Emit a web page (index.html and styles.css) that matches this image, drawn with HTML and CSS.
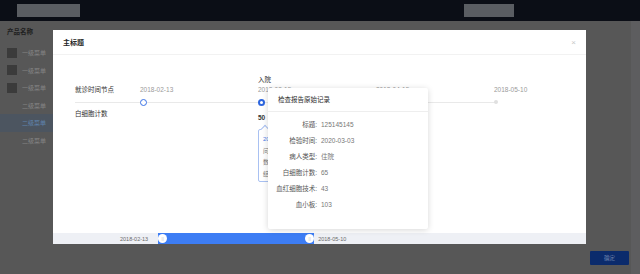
FILE: index.html
```html
<!DOCTYPE html>
<html lang="zh-CN">
<head>
    <meta charset="UTF-8">
    <meta name="viewport" content="width=device-width, initial-scale=1.0">
    <title>检查报告</title>
    <link rel="stylesheet" href="styles.css">
</head>
<body>

    <header class="topbar">
        <div class="logo-box"></div>
        <div class="user-box"></div>
    </header>

    <div class="main">
        <aside class="sidebar">
            <div class="product">产品名称</div>
            <ul class="menu">
                <li class="menu-item"><span class="menu-icon"></span>一级菜单</li>
                <li class="menu-item"><span class="menu-icon"></span>一级菜单</li>
                <li class="menu-item"><span class="menu-icon"></span>一级菜单</li>
                <li class="menu-item sub">二级菜单</li>
                <li class="menu-item sub active">二级菜单</li>
                <li class="menu-item sub">二级菜单</li>
            </ul>
        </aside>
        <div class="workspace">
            <button class="confirm">确定</button>
        </div>
        <div class="scroll-strip"></div>
    </div>

    <div class="modal">
        <div class="modal-header">
            <span class="modal-title">主标题</span>
            <span class="modal-close">×</span>
        </div>

        <div class="modal-body">
            <div class="timeline">
                <div class="row">
                    <div class="head"></div>
                    <div class="col"></div>
                    <div class="col event">入院</div>
                </div>
                <div class="row">
                    <div class="head label">就诊时间节点</div>
                    <div class="col date">2018-02-13</div>
                    <div class="col date">2018-03-15</div>
                    <div class="col date">2018-04-15</div>
                    <div class="col date">2018-05-10</div>
                </div>
                <div class="row axis">
                    <div class="head"></div>
                    <div class="col"><span class="node"></span></div>
                    <div class="col"><span class="node current"></span></div>
                    <div class="col"><span class="node"></span></div>
                    <div class="col"><span class="node dot"></span></div>
                </div>
                <div class="row">
                    <div class="head label">白细胞计数</div>
                    <div class="col"></div>
                    <div class="col value">50</div>
                </div>
                <div class="row">
                    <div class="head"></div>
                    <div class="col"></div>
                    <div class="col">
                        <div class="tip">
                            <div class="tip-date">2018-03-15</div>
                            <div>问诊记录：入院检查</div>
                            <div>数值：50</div>
                            <div>结论：正常范围</div>
                        </div>
                    </div>
                </div>
            </div>

            <div class="report">
                <div class="report-title">检查报告原始记录</div>
                <div class="report-rows">
                    <div class="report-row"><span class="report-key">标题:</span><span class="report-val">125145145</span></div>
                    <div class="report-row"><span class="report-key">检验时间:</span><span class="report-val">2020-03-03</span></div>
                    <div class="report-row"><span class="report-key">病人类型:</span><span class="report-val">住院</span></div>
                    <div class="report-row"><span class="report-key">白细胞计数:</span><span class="report-val">65</span></div>
                    <div class="report-row"><span class="report-key">血红细胞技术:</span><span class="report-val">43</span></div>
                    <div class="report-row"><span class="report-key">血小板:</span><span class="report-val">103</span></div>
                </div>
            </div>
        </div>

        <div class="slider">
            <span class="slider-label">2018-02-13</span>
            <div class="range">
                <span class="handle">||</span>
                <span class="handle">||</span>
            </div>
            <span class="slider-label">2018-05-10</span>
        </div>
    </div>

</body>
</html>
```

FILE: styles.css
```css
* {
    box-sizing: border-box;
}
body {
    margin: 0;
    width: 640px;
    height: 274px;
    overflow: hidden;
    background: #575757;
    font-family: "Liberation Sans", "Noto Sans CJK SC", sans-serif;
    position: relative;
}
.topbar {
    height: 21px;
    background: #0b0e16;
    display: flex;
    justify-content: space-between;
    align-items: center;
    padding: 0 126px 0 17px;
}
.logo-box {
    width: 63px;
    height: 13px;
    background: #5a5d62;
}
.user-box {
    width: 50px;
    height: 13px;
    background: #5a5d62;
}
.main {
    display: flex;
    height: 253px;
}
.sidebar {
    width: 53px;
    padding-top: 5px;
}
.product {
    padding-left: 7px;
    font-size: 6.5px;
    line-height: 12px;
    font-weight: bold;
    color: #1e1e1e;
}
.menu {
    list-style: none;
    margin: 6px 0 0;
    padding: 0;
}
.menu-item {
    height: 17.5px;
    display: flex;
    align-items: center;
    padding-left: 7px;
    font-size: 6px;
    color: #858585;
}
.menu-icon {
    width: 10px;
    height: 10px;
    background: #3b3b3b;
    margin-right: 5px;
}
.menu-item.sub {
    padding-left: 22px;
}
.menu-item.active {
    background: #4c5560;
    color: #5f84ad;
}
.workspace {
    flex: 1;
    display: flex;
    justify-content: flex-end;
    align-items: flex-end;
    padding: 0 2px 9px 0;
}
.confirm {
    width: 39px;
    height: 14px;
    border: none;
    border-radius: 1px;
    background: #0b2b6c;
    color: #6f84ad;
    font-family: inherit;
    font-size: 5.5px;
    padding: 0;
}
.scroll-strip {
    width: 9px;
    background: #5d5d5f;
}

/* dialog */
.modal {
    position: absolute;
    left: 53px;
    top: 30px;
    width: 533px;
    height: 214px;
    background: #fff;
    display: flex;
    flex-direction: column;
}
.modal-header {
    height: 25px;
    display: flex;
    justify-content: space-between;
    align-items: center;
    padding: 0 10px;
    border-bottom: 1px solid #f2f2f2;
}
.modal-title {
    font-size: 7px;
    font-weight: bold;
    color: #262626;
}
.modal-close {
    font-size: 8px;
    color: #c8c8c8;
}
.modal-body {
    flex: 1;
    position: relative;
    padding: 20px 0 0 22px;
}
.timeline {
    font-size: 6.5px;
    line-height: 10px;
}
.row {
    display: flex;
    min-height: 10px;
}
.head {
    width: 65px;
    flex-shrink: 0;
}
.col {
    width: 118px;
    flex-shrink: 0;
    white-space: nowrap;
}
.label,
.event {
    color: #333;
}
.date {
    color: #9a9a9a;
}
.axis {
    height: 14px;
    align-items: center;
    background: linear-gradient(#e9e9e9, #e9e9e9) no-repeat 0 50% / 422px 1px;
}
.axis .col {
    display: flex;
    align-items: center;
}
.node {
    width: 7px;
    height: 7px;
    border-radius: 50%;
    border: 1px solid #3a72e6;
    background: #fff;
}
.node.current {
    border: 2px solid #2d66df;
}
.node.dot {
    width: 4px;
    height: 4px;
    border: none;
    background: #e0e0e0;
}
.value {
    padding-top: 4px;
    font-weight: bold;
    color: #333;
}
.tip {
    position: relative;
    margin-top: 6px;
    width: 110px;
    height: 53px;
    border: 1px solid #a9c1f2;
    border-radius: 2px;
    padding: 4px 0 0 4px;
    font-size: 6px;
    line-height: 11.5px;
    color: #777;
}
.tip::before {
    content: "";
    position: absolute;
    left: 3px;
    top: -4px;
    width: 5px;
    height: 5px;
    background: #fff;
    border-left: 1px solid #a9c1f2;
    border-top: 1px solid #a9c1f2;
    transform: rotate(45deg);
}
.tip-date {
    color: #4a7de6;
}

/* floating record card */
.report {
    position: absolute;
    left: 215px;
    top: 33px;
    width: 160px;
    height: 141px;
    background: #fff;
    box-shadow: 0 1px 6px rgba(0, 0, 0, 0.16);
    border-radius: 2px;
}
.report-title {
    height: 24px;
    line-height: 24px;
    padding-left: 10px;
    font-size: 6.5px;
    color: #2b2b2b;
    border-bottom: 1px solid #eeeeee;
}
.report-rows {
    padding-top: 4px;
}
.report-row {
    display: flex;
    height: 16px;
    align-items: center;
    font-size: 6.5px;
}
.report-key {
    width: 50px;
    text-align: right;
    color: #555;
    padding-right: 1px;
}
.report-val {
    padding-left: 3px;
    color: #777;
}

/* range slider */
.slider {
    height: 11px;
    background: #eef0f5;
    display: flex;
    align-items: center;
    padding-left: 67px;
}
.slider-label {
    font-size: 5.5px;
    color: #6a6a6a;
}
.range {
    width: 156px;
    height: 11px;
    margin: 0 4px 0 10px;
    background: #3d7df4;
    display: flex;
    justify-content: space-between;
    align-items: center;
}
.handle {
    width: 9px;
    height: 9px;
    border-radius: 50%;
    background: #fff;
    color: #bbb;
    font-size: 4px;
    line-height: 9px;
    text-align: center;
}
```
